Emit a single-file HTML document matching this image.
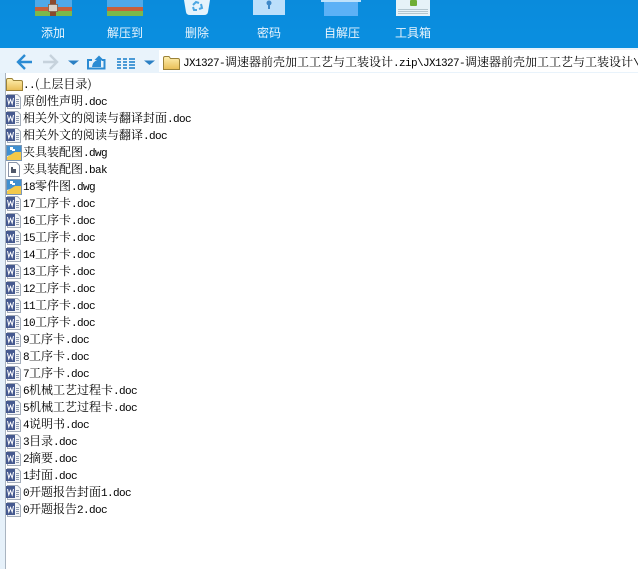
<!DOCTYPE html>
<html><head><meta charset="utf-8">
<style>
html,body{margin:0;padding:0;width:638px;height:569px;overflow:hidden;background:#fff}
body{position:relative;font-family:"WenQuanYi Zen Hei","Noto Serif CJK SC",serif;font-size:12px;color:#000}
#tb{position:absolute;left:0;top:0;width:638px;height:48px;background:linear-gradient(#0a8bdc,#0a8fe0)}
#nav{position:absolute;left:0;top:48px;width:638px;height:25px;background:#e9f3fb}
#addr{position:absolute;left:159px;top:50px;width:479px;height:22px;background:#fff}
#side{position:absolute;left:0;top:73px;width:5px;height:496px;background:#e6f1fa;border-right:1px solid #a9b4c0}
.l{position:absolute;top:26px;color:#eaf5fd;font-family:"WenQuanYi Zen Hei","Noto Sans CJK SC",sans-serif;font-size:12px;line-height:14px;white-space:nowrap}
.r{position:absolute;left:23px;height:16px;line-height:16px;white-space:nowrap;font-size:12px}
.r i,#p i{font-style:normal;font-size:11px;letter-spacing:-.6px;font-family:"Liberation Mono",monospace}
#p{position:absolute;left:183px;top:54px;line-height:16px;white-space:nowrap;font-size:12px}
svg{position:absolute;left:0;top:0}
</style></head><body>
<div id="tb"></div><div id="nav"></div><div id="addr"></div><div id="side"></div>
<span class="l" style="left:41px">添加</span>
<span class="l" style="left:107px">解压到</span>
<span class="l" style="left:185px">删除</span>
<span class="l" style="left:257px">密码</span>
<span class="l" style="left:324px">自解压</span>
<span class="l" style="left:395px">工具箱</span>
<svg width="638" height="569" viewBox="0 0 638 569">
<defs>
<linearGradient id="f" x1="0" y1="0" x2="0" y2="1"><stop offset="0" stop-color="#fff0b0"/><stop offset="1" stop-color="#e8bd55"/></linearGradient>
<g id="w"><path d="M1.500 0.500H11.500L14.500 3.500V14.500H1.500Z" fill="#f4f6f8" stroke="#a4adba"/><path d="M10 5.500h3M10 7.500h3M10 9.500h3M10 11.500h3" stroke="#8f9bb0"/><rect x="0" y="1" width="9" height="12" fill="#45598f"/><path d="M1.500 4l1.300 6 1.700-4.500 1.700 4.500 1.300-6" fill="none" stroke="#fff" stroke-width="1"/></g>
<g id="d"><path d="M0.500 0.500H15.500V15.500H0.500Z" fill="#f4f7f9" stroke="#7c97b5"/><path d="M1 1H15V7L1 11Z" fill="#3f8fd0"/><path d="M1 15V12L9 7H15V15Z" fill="#f3c94a"/><path d="M4 2h3v2h2v2H6V5H4Z" fill="#fff"/></g>
</defs>
<!-- add -->
<rect x="35" y="0" width="37" height="7" fill="#4fa9e8"/><rect x="35" y="7" width="37" height="4" fill="#c8603a"/><rect x="35" y="11" width="37" height="5" fill="#7bb84b"/>
<rect x="50" y="0" width="6" height="16" fill="#8c4a2c"/><rect x="48.500" y="4.500" width="9" height="7" fill="#d9d2c8" stroke="#8c6a55"/>
<!-- extract -->
<rect x="107" y="0" width="36" height="7" fill="#4fa9e8"/><rect x="107" y="7" width="36" height="4" fill="#c8603a"/><rect x="107" y="11" width="36" height="5" fill="#7bb84b"/>
<!-- delete -->
<path d="M184 0H210L208 12Q207.500 15 204 15H190Q186.500 15 186 12Z" fill="#e4f3fc"/>
<path d="M193 5l3-3 3 1M201 4l1 4-3 1M193 7l1 3h3" fill="none" stroke="#4aa6e2" stroke-width="2"/>
<!-- password -->
<rect x="253" y="0" width="32" height="15" fill="#bcdffb"/><circle cx="269" cy="3" r="2.500" fill="#3f88c8"/><rect x="268" y="3" width="2" height="6" fill="#3f88c8"/>
<!-- self -->
<rect x="324" y="2" width="34" height="14" fill="#5cb1f6"/><rect x="321" y="0" width="40" height="2" fill="#bfe2fb"/>
<!-- tools -->
<rect x="396" y="0" width="34" height="16" fill="#e6f2f8"/><rect x="410" y="0" width="7" height="6" rx="1" fill="#6fae35"/>
<path d="M398 9.500h30M398 11.500h30M398 13.500h30" stroke="#b4c6cf"/>
<!-- nav -->
<path d="M25 55l-7 7 7 7M18 62H32" fill="none" stroke="#2b8bd3" stroke-width="2.400"/>
<path d="M50 55l7 7-7 7M43 62H57" fill="none" stroke="#c6d2dc" stroke-width="2.400"/>
<path d="M68 60.500h11l-5.500 4.500z" fill="#2b80c4"/>
<path d="M92 60h-4v8.500h16.500V60h-3" fill="none" stroke="#2b8bd3" stroke-width="2"/>
<path d="M92 67q0.500-5 5-7h-2.500l4.500-4.500 4.500 4.500h-2.500v7z" fill="#2b8bd3"/>
<g fill="#4a9ad6"><rect x="117" y="58" width="4" height="2"/><rect x="123" y="58" width="4" height="2"/><rect x="129" y="58" width="6" height="2"/><rect x="117" y="61" width="4" height="2"/><rect x="123" y="61" width="4" height="2"/><rect x="129" y="61" width="6" height="2"/><rect x="117" y="64" width="4" height="2"/><rect x="123" y="64" width="4" height="2"/><rect x="129" y="64" width="6" height="2"/><rect x="117" y="67" width="4" height="2"/><rect x="123" y="67" width="4" height="2"/><rect x="129" y="67" width="6" height="2"/></g>
<path d="M144 60.500h11l-5.500 4.500z" fill="#2b80c4"/>
<!-- addr folder -->
<path d="M163.500 69.500V58q0-1.500 1.500-1.500h4l1.500 2h7.500q1.500 0 1.500 1.500v9.500z" fill="url(#f)" stroke="#9b8238"/>
<!-- list folder -->
<path d="M6.500 90.500V80q0-1.500 1.500-1.500h4l1.500 2h7.500q1.500 0 1.500 1.500v8.500z" fill="url(#f)" stroke="#9b8238"/>
<use href="#w" x="6" y="94"/><use href="#w" x="6" y="111"/><use href="#w" x="6" y="128"/>
<use href="#d" x="6" y="145"/>
<path d="M8.500 162.500h8l3 3v11h-11z" fill="#fff" stroke="#8a94a8"/><path d="M11 167h2v6h-2zM13 169h3v4h-3z" fill="#50586a"/>
<use href="#d" x="6" y="179"/>
<use href="#w" x="6" y="196"/><use href="#w" x="6" y="213"/><use href="#w" x="6" y="230"/><use href="#w" x="6" y="247"/><use href="#w" x="6" y="264"/><use href="#w" x="6" y="281"/><use href="#w" x="6" y="298"/><use href="#w" x="6" y="315"/><use href="#w" x="6" y="332"/><use href="#w" x="6" y="349"/><use href="#w" x="6" y="366"/><use href="#w" x="6" y="383"/><use href="#w" x="6" y="400"/><use href="#w" x="6" y="417"/><use href="#w" x="6" y="434"/><use href="#w" x="6" y="451"/><use href="#w" x="6" y="468"/><use href="#w" x="6" y="485"/><use href="#w" x="6" y="502"/>
</svg>
<div id="p"><i>JX1327-</i>调速器前壳加工工艺与工装设计<i>.zip\JX1327-</i>调速器前壳加工工艺与工装设计<i>\</i></div>
<div class="r" style="top:76px"><i>..</i>(上层目录)</div>
<div class="r" style="top:93px">原创性声明<i>.doc</i></div>
<div class="r" style="top:110px">相关外文的阅读与翻译封面<i>.doc</i></div>
<div class="r" style="top:127px">相关外文的阅读与翻译<i>.doc</i></div>
<div class="r" style="top:144px">夹具装配图<i>.dwg</i></div>
<div class="r" style="top:161px">夹具装配图<i>.bak</i></div>
<div class="r" style="top:178px"><i>18</i>零件图<i>.dwg</i></div>
<div class="r" style="top:195px"><i>17</i>工序卡<i>.doc</i></div>
<div class="r" style="top:212px"><i>16</i>工序卡<i>.doc</i></div>
<div class="r" style="top:229px"><i>15</i>工序卡<i>.doc</i></div>
<div class="r" style="top:246px"><i>14</i>工序卡<i>.doc</i></div>
<div class="r" style="top:263px"><i>13</i>工序卡<i>.doc</i></div>
<div class="r" style="top:280px"><i>12</i>工序卡<i>.doc</i></div>
<div class="r" style="top:297px"><i>11</i>工序卡<i>.doc</i></div>
<div class="r" style="top:314px"><i>10</i>工序卡<i>.doc</i></div>
<div class="r" style="top:331px"><i>9</i>工序卡<i>.doc</i></div>
<div class="r" style="top:348px"><i>8</i>工序卡<i>.doc</i></div>
<div class="r" style="top:365px"><i>7</i>工序卡<i>.doc</i></div>
<div class="r" style="top:382px"><i>6</i>机械工艺过程卡<i>.doc</i></div>
<div class="r" style="top:399px"><i>5</i>机械工艺过程卡<i>.doc</i></div>
<div class="r" style="top:416px"><i>4</i>说明书<i>.doc</i></div>
<div class="r" style="top:433px"><i>3</i>目录<i>.doc</i></div>
<div class="r" style="top:450px"><i>2</i>摘要<i>.doc</i></div>
<div class="r" style="top:467px"><i>1</i>封面<i>.doc</i></div>
<div class="r" style="top:484px"><i>0</i>开题报告封面<i>1.doc</i></div>
<div class="r" style="top:501px"><i>0</i>开题报告<i>2.doc</i></div>
</body></html>
